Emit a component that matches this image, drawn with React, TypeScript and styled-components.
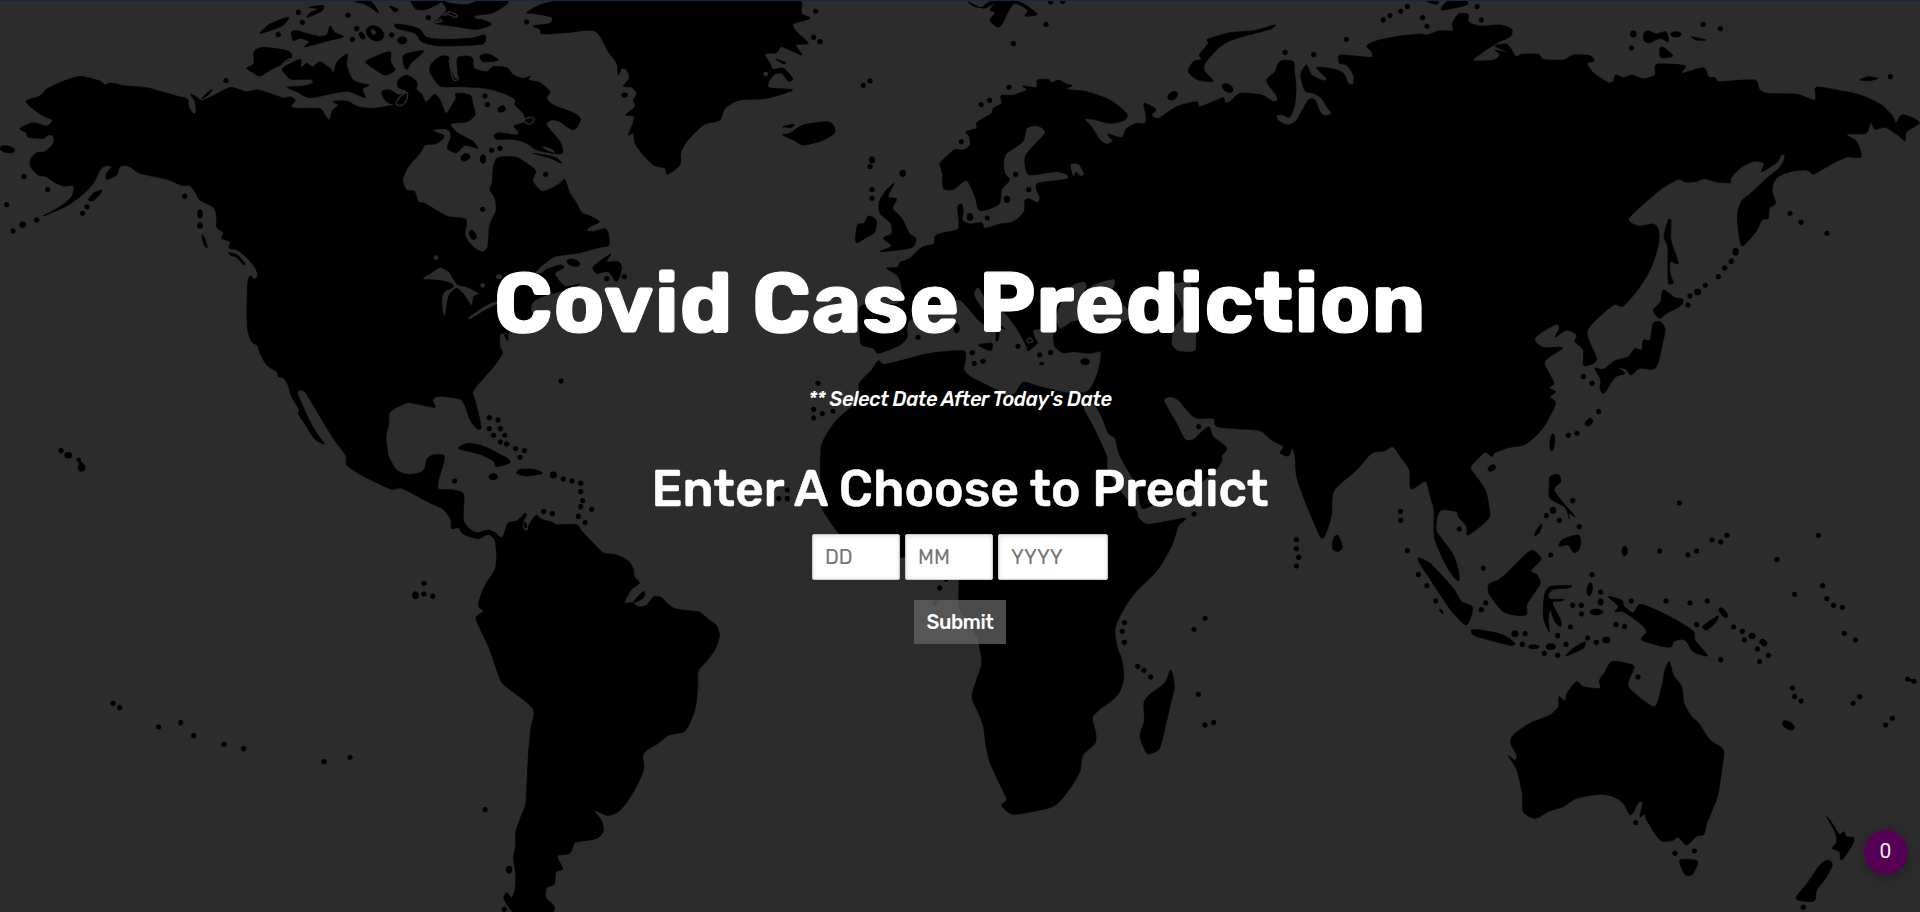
import React from "react";
import styled, { createGlobalStyle } from "styled-components";

const GlobalStyle = createGlobalStyle`
  * { box-sizing: border-box; }
  html, body { margin: 0; padding: 0; background: #2c2c2c; }
  body { font-family: Rubik, Roboto, "Liberation Sans", sans-serif; color: #fff; overflow: hidden; }
`;

/* The map is charted in overlapping sheets; a letter in a point list switches to that sheet's origin. */
const SHEETS: Record<string, [number, number]> = {
  A: [0, 0],
  B: [1080, 0],
  C: [2400, 0],
  D: [3600, 0],
  E: [4500, 0],
  F: [1080, 1368],
  G: [2280, 1368],
  H: [3720, 1260],
  I: [4440, 1500],
  J: [0, 1320],
};

function readPoints(source: string): number[][] {
  let origin = SHEETS.A;
  const points: number[][] = [];
  for (const token of source.trim().split(/\s+/)) {
    if (SHEETS[token]) {
      origin = SHEETS[token];
      continue;
    }
    const [x, y, ...rest] = token.split(",").map(Number);
    points.push([x + origin[0], y + origin[1], ...rest]);
  }
  return points;
}

/* Closed curve through the points, slightly rounded at each of them. */
function coast(source: string): string {
  const p = readPoints(source);
  const n = p.length;
  const k = 0.13;
  let d = `M${p[0][0]} ${p[0][1]}`;
  for (let i = 0; i < n; i++) {
    const a = p[(i + n - 1) % n];
    const b = p[i];
    const c = p[(i + 1) % n];
    const e = p[(i + 2) % n];
    const span = Math.hypot(c[0] - b[0], c[1] - b[1]);
    const t1 = Math.min(k, (span * 0.35) / (Math.hypot(c[0] - a[0], c[1] - a[1]) || 1));
    const t2 = Math.min(k, (span * 0.35) / (Math.hypot(e[0] - b[0], e[1] - b[1]) || 1));
    d += `C${(b[0] + (c[0] - a[0]) * t1).toFixed(1)} ${(b[1] + (c[1] - a[1]) * t1).toFixed(1)} ${(c[0] - (e[0] - b[0]) * t2).toFixed(1)} ${(c[1] - (e[1] - b[1]) * t2).toFixed(1)} ${c[0]} ${c[1]}`;
  }
  return d + "Z";
}

const LAND = [
  // the Americas
  `A 78,305 120,288 140,267 170,252 200,240 225,232 250,230 300,243 315,254 335,249 370,257 440,263 480,274 530,288 562,297
   566,320 580,341 588,335 585,305 572,283 590,291 606,302 650,282 692,262 738,275 775,270 850,294 870,290 886,300 874,318 885,325 960,326 975,345 988,360 998,330 1015,315
   1000,305 1040,303 1075,320 1120,325 1165,318 1195,312 1220,275 1195,262 1195,240 1220,226 1250,245 1250,270 1265,282 1278,307
   1303,283 1320,300 1338,340 1355,318 1368,295 1368,280 1410,285 1418,310 1425,345 1400,365 1352,372 1375,400 1420,425 1432,445
   1395,436 1370,458 1342,445 1353,410 1345,390 1320,386 1298,392 1330,405 1328,418 1305,432 1275,435 1260,460 1225,500 1208,540
   1220,570 1243,574 1255,605 1275,610 1340,648 1397,658 1395,705 1410,730
   B 345,745 368,756 383,740 388,680 395,660 408,630 405,595 390,570 397,545 400,500 410,475 430,470 470,472 500,490 527,512
   518,540 530,560 547,574 575,565 600,550 614,538 630,580 650,610 665,638 690,648 718,665 690,680 680,692 700,694 735,686
   745,700 746,735 720,742 650,760 590,768 560,785 525,818 545,820 560,808 600,795 612,802 585,820 600,845 620,860 660,852
   630,868 560,885 520,905 512,930 520,945 500,965 470,985 445,1000 443,1022 430,1000 420,1005 420,1040 427,1060 405,1095
   340,1172 345,1200 355,1240 364,1285 350,1285 330,1260 318,1225 305,1200 280,1193 235,1189 218,1200 225,1222 185,1215
   145,1208 110,1222 88,1240 86,1275 78,1310 85,1368
   F 90,10 110,42 140,55 180,50 195,35 200,12 215,-2 252,-2 248,30 235,75 236,100 270,101 300,106 312,118 310,190 325,215
   350,230 385,222 405,230 425,245 435,225 445,200 470,195 495,172 500,178 488,200 490,218 502,224 508,205 528,178 545,190
   575,198 590,206 650,206 665,225 700,262 725,287 740,293 770,297 805,315 820,340 822,360 838,382 815,400 793,440 818,440
   835,452 860,447 880,423 905,425 925,445 945,458 985,464 1018,468 1045,490 1070,510 1078,540 1065,580 1040,615 1015,645
   1013,700 1005,760 985,810 970,828 925,838 900,858 865,880 848,898 852,935 835,980 800,1040 770,1070 740,1078 703,1063
   725,1095 730,1125 715,1145 690,1152 645,1160 630,1192 592,1200 608,1238 588,1248 583,1285 560,1295 558,1325 583,1352
   570,1380 475,1380 432,1330 440,1310 455,1325 465,1300 467,1250 460,1205 467,1170 467,1130 480,1090 497,1045 500,1000
   505,900 512,820 518,757 430,685 415,655 385,570 348,488 370,466 355,450 365,410 380,380 405,340 410,300 405,255 385,235
   355,248 310,235 295,215 275,218 272,190 250,160 225,148 180,125 125,97 95,100 50,80 0,55
   A 1040,1395 1038,1368 1000,1315 960,1250 918,1180 905,1170 892,1178 905,1210 925,1255 950,1300 973,1332 945,1318 920,1280
   895,1242 897,1228 875,1190 862,1150 850,1133 835,1130 830,1115 800,1095 780,1060 773,1037 755,1025 743,990 741,930 743,850
   750,828 765,838 773,822 760,795 735,768 712,750 688,745 690,725 665,715 670,698 650,682 650,650 640,622 600,600 585,575
   570,557 545,556 500,538 420,520 385,498 360,500 350,525 320,538 320,520 335,500 315,498 300,510 280,550 250,582 200,618
   130,648 180,620 215,590 220,558 190,558 160,545 140,530 115,525 92,500 93,475 110,458 135,455 160,430 160,408 145,405
   130,415 85,412 78,398 60,385 100,368 140,378 157,360 125,345`,
  // Arctic islands
  `A 740,205 762,190 762,155 790,142 865,153 875,172 850,190 815,208 780,228 760,218`,
  `A 848,205 900,178 903,203 920,190 938,200 960,185 990,205 1000,218 1012,185 1042,162 1040,195 1055,235 1075,248 1107,255
   1087,268 1095,293 1045,274 1000,280 930,293 890,275 862,262 910,258 940,248 930,238 875,238 858,225`,
  `A 780,100 810,72 865,52 850,75 815,90`,
  `A 875,95 895,93 950,108 980,105 990,78 1005,98 1030,110 985,122 915,140 928,125 900,115 880,122`,
  `A 922,52 930,38 955,27 928,22 970,16 965,33`,
  `A 1097,185 1125,170 1170,155 1172,185 1185,210 1155,225 1120,205`,
  `A 1212,165 1270,152 1250,175 1232,190 1222,208 1213,200`,
  `A 1060,2 1110,2 1135,38 1100,15`,
  `A 1168,18 1195,28 1185,36`,
  `A 1145,275 1170,270 1195,285 1222,280 1200,315 1160,305`,
  `B 155,2 245,2 200,28 170,28 160,18`,
  `B 245,2 270,10 320,14 360,2 445,5 400,38 345,48 395,72 350,88 290,80 225,70 240,52 260,30`,
  `B 105,72 150,78 180,88 200,112 250,118 330,115 375,105 368,132 240,138 185,125 165,100 110,85`,
  `B 240,258 210,215 215,190 240,170 265,170 272,200 280,230 290,238 294,225 292,175 320,168 338,175 342,205 380,215 400,200
   440,203 460,225 490,235 512,228 505,240 540,248 570,275 560,295 580,315 640,338 662,358 640,390 600,365 575,360 560,375
   600,425 608,460 580,460 530,450 500,430 460,418 410,418 402,405 420,398 470,405 475,395 462,378 495,365 490,340 465,315
   465,298 430,280 375,265 300,260`,
  `B 360,168 385,162 415,180 370,185`,
  `B 518,460 560,466 590,474 605,490 570,474`,
  `B 700,800 752,762 740,785 775,785 785,805 770,845 745,815 710,820`,
  `A 265,600 280,580 305,570 300,582 280,602`,
  `A 606,705 614,715 622,743 612,735`,
  `A 687,758 712,765 736,792 730,794 710,772 690,765`,
  `A 605,298 620,280 638,267 625,285`,
  // Greenland, Iceland
  `B 500,38 540,15 600,2 1318,2 1325,40 1350,55 1300,72 1310,95 1345,130 1308,135 1325,165 1265,140 1250,158 1215,162 1230,190
   1240,208 1270,205 1298,235 1285,243 1265,220 1240,225 1225,262 1298,270 1220,295 1140,300 1095,325 1080,360 1030,375
   980,425 962,460 960,495 922,523 915,505 880,495 850,465 825,430 820,400 805,405 815,380 822,350 797,345 825,320 820,300
   830,280 815,262 790,258 808,235 800,210 785,205 775,225 770,190 745,155 705,93 620,98 545,102 540,88 520,78 570,70
   575,52 530,42`,
  `B 1268,405 1290,400 1330,375 1408,366 1425,397 1385,422 1330,435 1300,420`,
  `B 1268,380 1302,373 1295,382`,
  `B 1248,178 1278,188 1270,191`,
  // Caribbean
  `B 295,1345 325,1330 375,1340 430,1368 F 440,5 450,20 410,32 400,15 360,-5 B 330,1355`,
  `F 470,52 480,40 520,40 548,52 500,60`,
  `F 820,438 850,406 855,415 845,430`,
  // Hawaii
  `J 229,58 240,54 243,66 254,76 254,90 240,94 234,84 238,70`,
  // Eurasia and Africa
  `C 260,805 293,802 300,787 330,775 365,742 400,732 405,708 430,698 475,685 473,620 485,612 490,635 487,660 510,672 545,668
   555,685 600,672 640,665 672,635 675,600 690,597 712,608 720,592 710,570 712,550 800,537 803,525 770,515 690,525 678,510
   678,465 735,400 725,383 705,377 680,385 668,425 620,460 610,490 615,520 628,540 605,570 597,612 540,632 525,590 500,542
   460,568 430,565 427,520 420,490 445,465 465,448 490,450 510,435 508,410 498,395 530,385 530,368 575,340 580,325 605,310
   603,287 640,285 680,270 668,258 710,262 712,240 745,238 755,248 775,240 800,252 817,257 800,268 860,275 930,300 980,340 975,360 930,370
   880,358 855,358 875,380 900,420 920,432 938,422 922,402 965,412 980,385 1010,370 1035,370 1038,345 1032,310 1068,328
   1055,345 1075,355 1130,320 1190,305 1200,320 1270,293 1275,308 1290,305 1320,280 1385,285 1420,305 1433,300 1428,285
   1400,242 1425,215
   D 235,190 250,181 280,185 283,215 288,260 285,310 270,352 250,345 230,346 235,362 265,375 290,360 325,300 345,300 360,335
   375,347 395,340 380,320 365,295 340,280 315,272 302,225 320,195 335,225 370,242 380,235 350,203 400,207 430,220 445,250
   460,252 460,225 440,195 418,190 420,165 515,172 515,155 500,138 530,122 600,108 665,102 680,105 720,92 758,92 757,70
   775,42 805,43 805,65 840,78 900,75 935,88 930,110 885,132 820,178 840,183 880,180 900,165 885,150 925,158 885,138 920,132
   935,150 948,170
   E 65,163 115,163 130,178 190,180 220,165 270,167 283,183 262,190 280,218 325,248 340,243 347,225 370,233 395,225
   430,236 465,225 470,193 555,197 545,220 610,203 625,230 645,233 655,245 765,240 778,268 800,280 890,283 945,300 948,262
   1010,270 1080,285 1140,312 1175,345 1188,368 1205,345 1235,352 1258,370 1220,395 1215,422 1190,403 1155,382 1125,388
   1112,367 1098,400 1040,403 1070,425 1083,470 1040,472 990,495 942,522 920,510 870,515 835,530 820,550 817,575 827,610
   808,625 805,655 785,660 770,692 727,738 715,690 713,640 725,602 750,582 800,535 840,502 855,470 845,463 830,488 785,515
   792,490 760,484 720,505 692,535 690,548 650,546 615,536 585,545 555,546 535,538 480,570 387,655 415,678 460,672 475,690
   476,730 455,800 420,860 370,918 340,915 262,993 290,1078 252,1097 250,1050 225,1025 230,1005 200,990 165,1012 178,985
   170,972 120,1000 104,1020 130,1042 188,1043 150,1070 133,1090 162,1150 147,1163 167,1175 150,1190 167,1210 135,1275
   100,1315 70,1335 30,1342
   H 765,98 755,110 735,97 700,130 692,145 720,185 738,215 747,260 747,295 685,345 680,320 655,290 650,275 605,270 592,290
   588,330 605,355 640,405 655,450 657,482 640,470 610,420 585,360 582,330 582,270 572,235 557,185 518,207 510,200 508,150
   480,108 458,80 435,92 395,100 350,150 282,212 275,280 265,320 245,355 210,280 190,230 170,170 165,110 157,83 145,108
   120,98 130,80 95,60 60,32 0,27
   C 1260,1282 1245,1275 1240,1255 1190,1255 1165,1235 1135,1200 1110,1190 1092,1202 1130,1270 1155,1318 1180,1318 1225,1280
   1240,1310 1280,1343 1265,1368
   G 1385,15 1360,50 1290,100 1150,158 1140,140 1130,90 1080,0
   C 945,1315 925,1300 905,1250 880,1212 850,1222 880,1280 920,1368
   G 1042,40 1085,110 1130,165 1135,185 1165,205 1275,187 1255,210 1235,270 1190,345 1125,410 1085,470 1065,520 1072,575
   1085,610 1091,665 1080,705 1060,730 1020,760 997,785 1007,830 1005,862 968,898 960,945 935,990 900,1035 870,1055 760,1075
   725,1048 740,1030 715,975 690,920 678,870 670,810 655,770 637,730 640,700 665,625 660,580 650,540 620,500 597,450 596,370
   575,340 540,310 500,300 430,303 360,325 300,320 235,232 190,165 182,130 182,0
   C 68,1325 110,1260 175,1200 178,1150 215,1110 235,1082 250,1093 290,1085 390,1060 490,1052 497,1075 492,1110 520,1135
   600,1175 620,1188 645,1180 670,1147 720,1160 800,1178 860,1175 885,1140 900,1090 902,1055 870,1060 820,1055 790,1058
   765,1040 760,1000 765,975 740,985 700,990 705,1015 712,1030 685,1052 680,1040 665,1010 650,985 620,945 590,920 560,900
   535,862 522,885 550,930 600,975 617,988 600,985 595,1020 588,1022 585,990 540,965 480,900 440,915 400,930 330,960 320,990
   322,1010 300,1035 235,1060 220,1045 185,1035 180,1010 183,918 290,912 308,880 295,830`,
  `C 240,755 275,738 250,715 275,700 272,670 240,640 238,605 255,575 282,550 265,590 290,597 278,625 305,655 328,700 348,715
   340,740 310,748`,
  `C 168,727 172,675 192,670 205,648 228,660 225,695 200,712`,
  `C 505,5 520,18 545,22 570,5 650,2 712,42 675,48 682,30 640,12 600,80 570,62 585,38 570,30 585,8 550,25`,
  `C 1165,215 1180,185 1205,178 1198,165 1225,130 1222,118 1290,98 1360,92 1425,75 1410,88 1310,115 1260,140 1215,190
   1213,212 1240,243 1195,240`,
  `C 535,1035 575,1030 572,1052`,
  `D 725,30 745,2 800,2 800,15`,
  `D 680,4 715,4 710,13`,
  `E 432,100 445,92 470,102 498,95 505,125 480,115 450,128 432,122`,
  `E 480,145 490,142 518,165 510,172 482,172`,
  `E 575,110 618,120 590,120`,
  `E 1080,240 1105,230 1133,235 1110,242`,
  `E 505,658 513,660 513,720 535,790 512,785 510,820 520,848 505,850 503,740 492,710`,
  `E 490,870 525,893 548,897 545,915 500,940 478,955 460,930 482,905`,
  `E 460,970 480,965 495,985 490,1020 467,1103 420,1105 393,1125 378,1108 355,1103 375,1120 345,1132 312,1180 300,1165
   302,1140 285,1105 310,1108 345,1082 385,1070 405,1045 425,1050 430,1020 450,1020`,
  `G 1232,642 1243,690 1230,750 1200,875 1180,890 1160,892 1140,840 1153,795 1152,740 1170,715 1215,680`,
  // South-east Asia
  `H 283,350 295,347 307,380 297,394 280,390 277,370`,
  `H 533,417 570,430 640,505 665,545 698,562 680,615 640,580 615,545 585,500`,
  `H 695,630 720,630 785,643 825,670 815,677 740,658 700,645`,
  `H 872,392 903,418 873,452 892,465 900,492 875,530 860,555 860,583 835,587 790,575 760,540 745,515 747,493 775,480 800,460`,
  `H 928,635 912,600 910,560 915,520 930,500 995,497 985,504 940,508 925,525 930,537 972,538 965,543 937,548 962,600
   962,620 945,605 930,570 925,600`,
  `H 930,170 955,163 962,185 943,212 1005,290 985,278 988,296 975,262 930,235 928,200`,
  `H 884,348 890,330 905,312 900,335`,
  `H 957,378 970,357 1015,345 1022,370 1015,392 1000,397 985,375`,
  `H 978,708 1000,685 1035,665 1030,685`,
  `I 385,290 425,300 432,318 460,338 482,313 560,345 640,393 645,420 682,467 640,455 620,425 605,418 580,425 575,440 550,440
   485,420 500,395 480,370 430,335 405,335 415,318`,
  `I 668,380 690,362 715,348 705,370 680,390`,
  // Oceania
  `I 395,485 440,490 463,500 447,540 448,565 522,620 545,560 555,510 568,485 580,525 605,560 612,610 635,650 655,668 690,720
   730,750 725,810 712,890 680,970 672,1003 650,1008 620,1035 595,1012 575,1022 540,1020 500,960 495,942 480,950 488,908
   475,908 452,945 430,910 400,890 360,883 290,895 250,920 210,932 165,955 130,935 127,880 110,810 85,767 105,782 110,765
   92,730 100,705 150,670 210,645 235,620 237,590 255,603 262,578 290,545 310,560 360,565 358,542 375,515`,
  `I 600,1080 652,1083 640,1120 625,1127 612,1120`,
  `I 1040,950 1060,975 1078,1003 1092,995 1100,1010 1122,1013 1115,1038 1085,1080 1078,1055 1057,1045 1070,1025 1065,995`,
  `I 948,1195 985,1145 1020,1095 1045,1080 1057,1095 1040,1130 1010,1170 1005,1200 985,1205`,
];

const WATER = [
  `B 190,836 215,818 240,803 265,815 290,852 320,862 355,880 340,890 335,915 320,895 310,880 290,864 270,880 262,900 255,945
   248,930 247,890 255,875 280,862 275,850 240,840`,
  `B 325,953 380,916 412,904 412,911 375,930 330,957`,
  `B 546,440 570,445 586,458 565,453`,
  `C 780,985 770,950 790,890 815,858 850,845 860,858 850,880 880,855 940,838 942,860 925,880 960,905 990,935 990,955 960,965
   850,960 815,965`,
  `C 1125,850 1170,848 1175,880 1165,920 1185,970 1187,1048 1160,1055 1130,1050 1115,1030 1122,985 1150,945 1138,900 1122,870`,
  `C 812,495 835,493 852,522 840,527 828,515 820,528`,
];

/* Narrow channels, drawn as thin outlines. */
const CHANNELS = [
  `A 1110,312 1095,300 1108,304`,
  `A 1188,312 1200,290 1222,278 1220,300 1205,316`,
  `A 848,192 862,180 875,176 866,188`,
  `B 268,180 273,215 278,235 288,242 295,235 288,222 282,222 275,205`,
  `B 492,362 508,352 524,358 508,373`,
  `B 250,45 270,36 292,46 285,52 268,44`,
  `B 226,68 240,58 246,64`,
  `B 346,50 370,54 352,55`,
  `C 680,1022 690,1014 698,1024 688,1028`,
];

/* Islets: x, y and, where it is not a plain dot, its half width, half height and tilt. */
const ISLETS = `
A 22,448,22,10,10 72,530 143,569 20,614 110,660 68,674,9 39,693 261,621 248,640 554,589 600,642,7,13 600,677,8,9 678,242 895,37
835,104 907,67 1044,46 1070,86 1057,118 1086,107,7,12,-35 1175,105 1207,121,14,11 1285,53 1125,100,28,21,30
B 375,288 382,314 425,327,12,9,-20 500,66 316,472,14,10,-25 369,477,8,13 395,451 420,445 557,523 368,628 338,705,9,14,-25 603,1143
640,788,20,10,15 740,836 793,830 794,285,9,7 1367,34 1361,112 1380,125 388,1253 414,1260 388,1286 421,1286 401,1306 434,1306
421,1326 440,1332 467,1346 493,1352 508,361,12,7
F 400,62,13,9 480,4 284,75 580,57,10 610,69 636,75 662,82 662,107 668,134 662,152 695,160 655,181 675,200 551,167 577,173
192,382 166,418,9,11 192,414 218,421 375,1061 447,1241,9,11 433,1360 496,207,4,9,-15
C 216,480,8,10 210,500 308,520,9,10 216,569 216,595 190,256 210,243 738,73 640,131 627,262 569,301 543,314 484,425 647,523
686,569 621,598,9,10 510,651,9,11 562,654 1118,287,16,11,-35 1283,264,18,11,30 752,6 788,4 354,1012 517,1058 549,1084 523,1091
654,1039 719,1065 752,1058 725,1091,7,4 855,1085,13,9 470,985,8,14 54,1150 41,1228 41,1254 67,1241 99,1234 1196,1280
D 255,157 341,164 439,118 550,60 570,47 602,34 622,20 668,53 681,79 831,20 844,60
E 400,102,9,10 394,144 609,73 661,86 1171,230 528,103,16,8 870,640 903,667 981,700 707,755,9,11 694,784 674,804 655,830 616,856
593,876,10,9 570,888 564,915 250,1130 276,1150 296,1235 267,1267,13,9,-50 231,1300 205,1306 157,1327,7,26,5
G 539,396 558,370 525,440 1093,500 1087,526 1093,559 1133,631 1152,643 1172,663 1315,715 1335,807 1361,800 1335,487 1302,520
1302,174 82,102 82,128 56,128
H 482,274 482,301 169,359 169,386 176,412 169,438 502,392 535,464 561,497 587,543 604,574,3,8,-35 730,445 737,549 724,569 658,327
998,242 958,301 919,287 939,271,9,10 1018,320 932,405 847,673 825,641,10,9 855,641 881,680,16,6 932,680,14,9 913,700 953,706
978,673 953,647 991,621 998,556 1024,556 1024,582 1043,654 755,144,12,8,-30
I 336,224 362,276 362,306,8,10 329,268,8,20,8 349,336,20,9 434,153,8,14 539,153 624,165 650,153 696,120 722,126 741,106 891,179
1015,106 1028,257 944,283 1041,296 1061,316 1087,322 1093,400 1126,420 454,303 558,303 630,309 682,303 650,374 408,374 434,380
349,427 379,420,11,9 761,381 787,394 793,420 816,408,10,9 850,428,12,9,35 832,447 865,466 839,485 722,479 598,9 937,564 944,590
963,603 1139,590 1119,610 1237,655 1217,675 1283,538 1302,544 1292,541,10,3,20 474,531 467,968 585,1060 643,1053 970,1222
730,338,8,18,-38 925,676,20,11,30
J 183,32 205,46,11,9 339,790 359,803 476,861 542,848 581,887 672,913 731,926 972,965 1050,952
`;

const LAKES = `B 228,773 368,856 417,830,9,7 1217,222 A 1120,96,9,6,45`;

const Page = styled.main`
  position: relative;
  height: 912px;
  overflow: hidden;
  background: #2c2c2c;
  border-top: 1px solid #14274e;
`;

const WorldMap = styled.svg`
  position: absolute;
  left: 0;
  top: -1px;
  display: block;
  width: 1920px;
  height: 912px;
`;

const Content = styled.section`
  position: relative;
  display: flex;
  flex-direction: column;
  align-items: center;
  padding-top: 252px;
`;

const Title = styled.h1`
  margin: 0;
  font-size: 84px;
  line-height: 100px;
  font-weight: 700;
  letter-spacing: 0.8px;
  -webkit-text-stroke: 1.2px #fff;
  white-space: nowrap;
`;

const Hint = styled.p`
  margin: 34px 0 0;
  font-size: 20px;
  line-height: 24px;
  font-weight: 500;
  font-style: italic;
  letter-spacing: -0.38px;
  white-space: nowrap;
`;

const Heading = styled.h2`
  margin: 48px 0 0;
  font-size: 50px;
  line-height: 60px;
  font-weight: 500;
  letter-spacing: 0.03px;
  -webkit-text-stroke: 0.5px #fff;
  white-space: nowrap;
`;

const DateForm = styled.form`
  display: flex;
  flex-direction: column;
  align-items: center;
  gap: 20px;
  margin-top: 15px;
`;

const Fields = styled.div`
  display: flex;
  gap: 5px;
`;

const DateField = styled.input<{ $width: number }>`
  width: ${({ $width }) => $width}px;
  height: 46px;
  padding: 0 12px;
  border: 1px solid #ccc;
  border-radius: 2px;
  background: #fff;
  box-shadow: inset 0 1px 4px #ddd;
  color: #333;
  font: 400 20px Rubik, Roboto, sans-serif;
  &::placeholder { color: #757575; opacity: 1; }
`;

const SubmitButton = styled.button`
  width: 92px;
  height: 44px;
  padding: 0;
  border: 0;
  background: rgba(100, 100, 100, 0.75);
  color: #fff;
  font: 500 20px Rubik, Roboto, sans-serif;
  letter-spacing: -0.38px;
`;

const Counter = styled.div`
  position: absolute;
  left: 1864px;
  top: 829px;
  width: 44px;
  height: 45px;
  border-radius: 50%;
  background: #550055;
  box-shadow: 0 2px 14px rgba(0, 0, 0, 0.25);
  color: #eee;
  font-family: Roboto, sans-serif;
  font-size: 21px;
  line-height: 42px;
  text-align: center;
  padding-right: 1px;
`;

function Dots({ source }: { source: string }) {
  return (
    <>
      {readPoints(source).map(([x, y, rx = 7, ry = rx, tilt = 0], i) => (
        <ellipse key={i} cx={x} cy={y} rx={rx} ry={ry} transform={`rotate(${tilt} ${x} ${y})`} />
      ))}
    </>
  );
}

export default function App() {
  return (
    <>
      <GlobalStyle />
      <Page>
        <WorldMap viewBox="0 0 5760 2736" aria-hidden="true">
          <g fill="#000" stroke="#000" strokeWidth="2" strokeLinejoin="round">
            {LAND.map((shape, i) => (
              <path key={i} d={coast(shape)} />
            ))}
            <Dots source={ISLETS} />
          </g>
          <g fill="#2c2c2c">
            {WATER.map((shape, i) => (
              <path key={i} d={coast(shape)} />
            ))}
            <Dots source={LAKES} />
          </g>
          <g fill="none" stroke="#2c2c2c" strokeWidth="4" strokeLinejoin="round">
            {CHANNELS.map((shape, i) => (
              <path key={i} d={coast(shape)} />
            ))}
          </g>
          <rect width="5760" height="3" fill="#14274e" />
        </WorldMap>
        <Content>
          <Title>Covid Case Prediction</Title>
          <Hint>** Select Date After Today's Date</Hint>
          <Heading>Enter A Choose to Predict</Heading>
          <DateForm>
            <Fields>
              <DateField $width={88} placeholder="DD" />
              <DateField $width={88} placeholder="MM" />
              <DateField $width={110} placeholder="YYYY" />
            </Fields>
            <SubmitButton type="button">Submit</SubmitButton>
          </DateForm>
        </Content>
        <Counter>0</Counter>
      </Page>
    </>
  );
}
